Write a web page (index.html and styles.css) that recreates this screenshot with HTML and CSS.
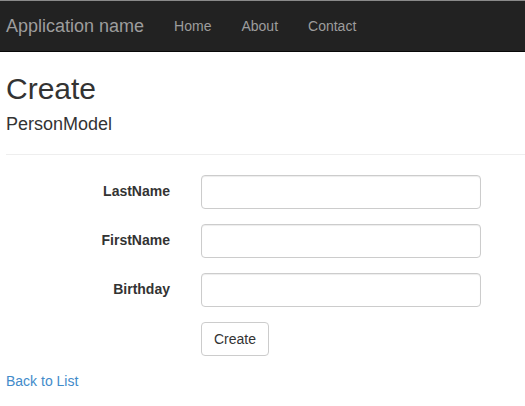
FILE: index.html
```html
<!DOCTYPE html>
<html>
<head>
<meta charset="utf-8">
<title>Create</title>
<link rel="stylesheet" href="styles.css">
</head>
<body>
<nav class="navbar">
  <a class="brand" href="#">Application name</a>
  <ul class="nav">
    <li><a href="#">Home</a></li>
    <li><a href="#">About</a></li>
    <li><a href="#">Contact</a></li>
  </ul>
</nav>
<main class="container">
  <h2 class="title">Create</h2>
  <form class="form">
    <h4 class="subtitle">PersonModel</h4>
    <hr class="divider">
    <div class="form-group">
      <label class="label">LastName</label>
      <input class="input" type="text">
    </div>
    <div class="form-group">
      <label class="label">FirstName</label>
      <input class="input" type="text">
    </div>
    <div class="form-group">
      <label class="label">Birthday</label>
      <input class="input" type="text">
    </div>
    <div class="form-group">
      <span class="label"></span>
      <button class="btn" type="button">Create</button>
    </div>
  </form>
  <div class="back"><a href="#">Back to List</a></div>
</main>
</body>
</html>
```
FILE: styles.css
```css
* { box-sizing: border-box; }
html, body { margin: 0; padding: 0; }
body {
  font-family: "Liberation Sans", Arial, sans-serif;
  font-size: 14px;
  line-height: 1.428571;
  color: #333;
  background: #fff;
}
a { color: #428bca; text-decoration: none; }

.navbar {
  display: flex;
  align-items: stretch;
  height: 52px;
  background: #222;
  border-top: 1px solid #8a8a8a;
  border-bottom: 1px solid #080808;
  padding-left: 6px;
}
.brand {
  display: block;
  padding: 15px 15px 15px 0;
  font-size: 18px;
  line-height: 20px;
  color: #9d9d9d;
}
.nav {
  display: flex;
  list-style: none;
  margin: 0;
  padding: 0;
}
.nav a {
  display: block;
  padding: 15px;
  line-height: 20px;
  color: #9d9d9d;
}

.container { padding: 0 0 0 6px; }
.title {
  margin: 20px 0 10px;
  font-size: 30px;
  font-weight: 500;
  line-height: 1.1;
}
.subtitle {
  margin: 10px 0 10px;
  font-size: 18px;
  font-weight: 500;
  line-height: 1.1;
}
.form { margin: 0; }
.divider {
  margin: 19px 0 20px;
  border: 0;
  border-top: 1px solid #eee;
}
.form-group {
  display: flex;
  align-items: flex-start;
  margin-bottom: 15px;
}
.label {
  width: 164px;
  margin-right: 31px;
  padding-top: 7px;
  text-align: right;
  font-weight: bold;
}
.input {
  width: 280px;
  height: 34px;
  padding: 6px 12px;
  font: inherit;
  color: #555;
  background: #fff;
  border: 1px solid #ccc;
  border-radius: 4px;
  box-shadow: inset 0 1px 1px rgba(0,0,0,0.075);
}
.btn {
  height: 34px;
  padding: 6px 12px;
  font: inherit;
  line-height: 20px;
  color: #333;
  background: #fff;
  border: 1px solid #ccc;
  border-radius: 4px;
}
.back { line-height: 20px; }
```
